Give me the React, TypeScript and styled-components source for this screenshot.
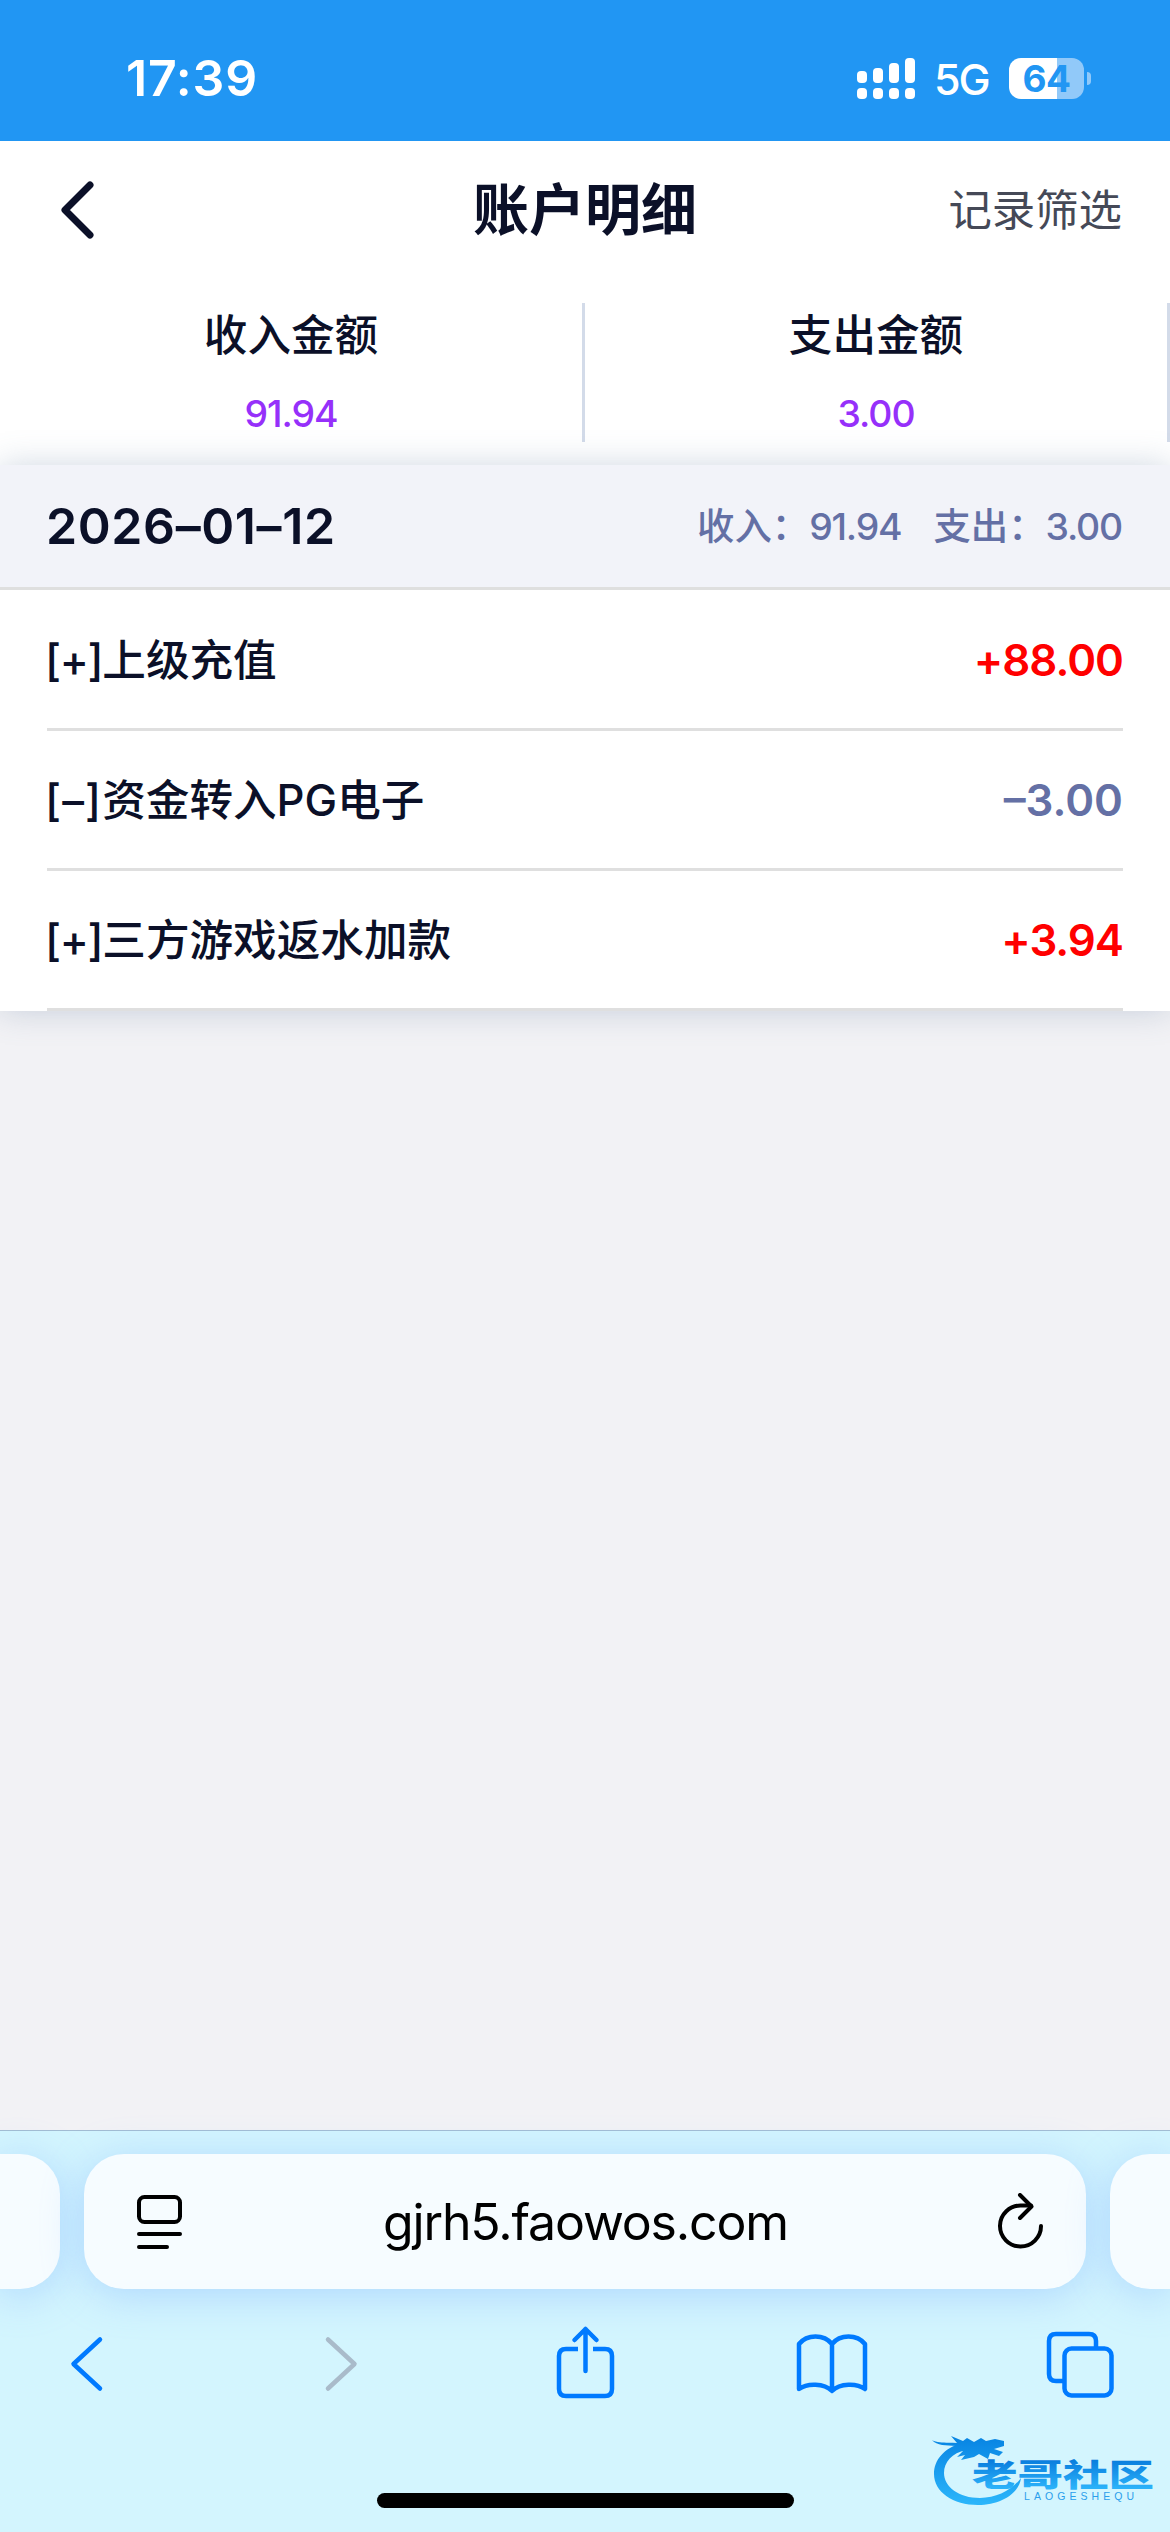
import React from 'react';
import styled, { createGlobalStyle } from 'styled-components';

const GlobalStyle = createGlobalStyle`
  * {
    box-sizing: border-box;
  }

  body {
    margin: 0;
    background: #f2f2f5;
    font-family: Inter, 'Noto Sans CJK SC', sans-serif;
    color: #0b1028;
  }
`;

const Screen = styled.div`
  position: relative;
  display: flex;
  flex-direction: column;
  width: 1170px;
  height: 2532px;
  overflow: hidden;
  background: #f2f2f5;
`;

/* status bar */
const StatusBar = styled.header`
  display: flex;
  justify-content: space-between;
  align-items: center;
  height: 141px;
  padding: 15px 79px 0 126px;
  background: #2196f3;
  color: #fff;
`;

const Clock = styled.time`
  font-size: 50px;
  font-weight: 600;
  line-height: 60px;
  letter-spacing: 0.8px;
`;

const StatusIcons = styled.div`
  display: flex;
  align-items: center;
`;

const Network = styled.span`
  width: 56px;
  margin: 2px 19px 0 18px;
  font-size: 43px;
  font-weight: 500;
  line-height: 44px;
  letter-spacing: -2px;
`;

const Battery = styled.div`
  display: flex;
  align-items: center;
  justify-content: center;
  width: 75px;
  height: 41px;
  border-radius: 12px;
  background: linear-gradient(to right, #fff 48px, #91c9f9 48px);
  color: #2196f3;
  font-size: 37px;
  font-weight: 700;
  line-height: 41px;
  letter-spacing: -0.5px;
`;

const BatteryCap = styled.div`
  width: 4px;
  height: 13px;
  margin-left: 3px;
  border-radius: 0 4px 4px 0;
  background: #91c9f9;
`;

/* page header */
const NavBar = styled.nav`
  display: grid;
  grid-template-columns: 1fr auto 1fr;
  align-items: center;
  height: 138px;
  padding: 0 48px 0 57px;
  background: #fff;
`;

const PageTitle = styled.h1`
  margin: 0 9px 0 0;
  font-size: 56px;
  font-weight: 700;
  line-height: 80px;
`;

const FilterLink = styled.span`
  justify-self: end;
  color: #454957;
  font-size: 43.4px;
  line-height: 60px;
`;

const Summary = styled.section`
  display: flex;
  height: 186px;
  padding-top: 24px;
  background: #fff;
`;

const SummaryItem = styled.div`
  display: flex;
  flex: 1;
  flex-direction: column;
  align-items: center;
  height: 139px;
  border-right: 3px solid #d3dbe9;
`;

const SummaryLabel = styled.span`
  margin-top: 1px;
  font-size: 43.6px;
  font-weight: 500;
  line-height: 64px;
`;

const SummaryValue = styled.span`
  margin-top: 22px;
  color: #9630fa;
  font-size: 37.4px;
  font-weight: 500;
  line-height: 48px;
  letter-spacing: -1px;
`;

/* day group */
const DayGroup = styled.section`
  position: relative;
  background: #fff;
  box-shadow: 0 0 31px rgba(100, 125, 160, 0.3);
`;

const DayHeader = styled.div`
  display: flex;
  justify-content: space-between;
  align-items: center;
  height: 125px;
  padding: 0 48px 0 46px;
  border-bottom: 3px solid #dfdfdf;
  background: #f2f3f9;
`;

const DayDate = styled.span`
  font-size: 50px;
  font-weight: 600;
  line-height: 60px;
  letter-spacing: 0.6px;
`;

const DayTotals = styled.div`
  display: flex;
  gap: 32px;
  padding-top: 2px;
  color: #6470a5;
  font-size: 37.4px;
  font-weight: 500;
  line-height: 50px;
`;

const TotalAmount = styled.span`
  letter-spacing: -1.200px;
`;

const RecordList = styled.ul`
  margin: 0;
  padding: 1px 47px 0;
  list-style: none;
`;

const RecordRow = styled.li`
  display: flex;
  justify-content: space-between;
  align-items: center;
  height: 140px;
  padding-top: 2px;
  border-bottom: 3px solid #dfdfdf;
`;

const RecordName = styled.span`
  margin-left: -2px;
  font-size: 43.6px;
  font-weight: 500;
  line-height: 64px;
`;

const RecordSign = styled.span<{ $income: boolean }>`
  letter-spacing: ${({ $income }) => ($income ? '-1.3px' : '1.1px')};
`;

const RecordAmount = styled.span<{ $income: boolean }>`
  color: ${({ $income }) => ($income ? '#ff0000' : '#6470a5')};
  font-size: 43.8px;
  font-weight: 600;
  line-height: 64px;
  letter-spacing: ${({ $income }) => ($income ? '-1px' : '0')};
`;

/* safari bottom bar */
const BrowserBar = styled.footer`
  display: flex;
  flex-direction: column;
  height: 402px;
  margin-top: auto;
  border-top: 1px solid #a2bcd3;
  background: #d3f5fe;
`;

const TabStrip = styled.div`
  display: flex;
  gap: 24px;
  height: 158px;
  padding-top: 23px;
`;

const AddressBar = styled.div`
  display: flex;
  flex: 1;
  justify-content: space-between;
  align-items: center;
  padding: 0 39px 0 51px;
  border-radius: 40px;
  background: #f6fcff;
  box-shadow: 0 6px 40px rgba(130, 180, 255, 0.45);
`;

const TabEdge = styled.div<{ $side: 'left' | 'right' }>`
  width: 60px;
  border-radius: ${({ $side }) => ($side === 'left' ? '0 40px 40px 0' : '40px 0 0 40px')};
  background: #f6fcff;
  box-shadow: 0 6px 40px rgba(130, 180, 255, 0.45);
`;

const Url = styled.span`
  margin-right: 11px;
  color: #000;
  font-size: 50px;
  line-height: 64px;
  letter-spacing: -1.150px;
`;

const Toolbar = styled.div`
  position: relative;
  display: flex;
  justify-content: space-between;
  align-items: center;
  height: 80px;
  margin-top: 35px;
  padding: 0 50px 0 47px;
`;

const HomeIndicator = styled.div`
  width: 417px;
  height: 15px;
  margin: 89px auto 0;
  border-radius: 8px;
  background: #000;
`;

const Watermark = styled.svg`
  position: absolute;
  right: 10px;
  bottom: 16px;
`;

const SIGNAL_TOPS = [13, 10, 5, 0];

const SignalIcon = () => (
  <svg width="59" height="41" viewBox="0 0 59 41" fill="#fff">
    {SIGNAL_TOPS.map((top, i) => (
      <g key={top}>
        <rect x={i * 16} y={top} width="10" height={25 - top} rx="4" />
        <rect x={i * 16} y="30" width="10" height="11" rx="4" />
      </g>
    ))}
  </svg>
);

const BackIcon = () => (
  <svg width="40" height="62" viewBox="0 0 40 62" fill="none">
    <path d="M33 6L8 31L33 56" stroke="#0b1028" strokeWidth="7" strokeLinecap="round" strokeLinejoin="round" />
  </svg>
);

const PageMenuIcon = () => (
  <svg width="50" height="58" viewBox="0 0 50 58" fill="none" stroke="#000" strokeWidth="4" strokeLinecap="round">
    <rect x="4" y="4" width="41" height="25" rx="5.5" />
    <path d="M4 41H45M4 54H32" />
  </svg>
);

const ReloadIcon = () => (
  <svg width="50" height="58" viewBox="0 0 50 58" fill="none" stroke="#000" strokeWidth="4" strokeLinecap="round" strokeLinejoin="round">
    <path d="M44 33A20.5 20.5 0 1 1 24 12.5H34" />
    <path d="M23 2L34.5 13.5L23 25" />
  </svg>
);

const ToolIcon = ({ color = '#007aff', children }: { color?: string; children: React.ReactNode }) => (
  <svg width="80" height="80" viewBox="0 0 80 80" fill="none" stroke={color} strokeWidth="4.5" strokeLinecap="round" strokeLinejoin="round">
    {children}
  </svg>
);

const BrandMark = () => (
  <Watermark width="232" height="84" viewBox="0 0 232 84">
    <defs>
      <linearGradient id="brand" x1="0" y1="5" x2="0" y2="74" gradientUnits="userSpaceOnUse">
        <stop offset="0" stopColor="#0784e3" />
        <stop offset="1" stopColor="#2db7fb" />
      </linearGradient>
      <linearGradient id="brandText" x1="0" y1="27" x2="0" y2="56" gradientUnits="userSpaceOnUse">
        <stop offset="0" stopColor="#087bdc" />
        <stop offset="1" stopColor="#2bb2fa" />
      </linearGradient>
    </defs>
    {/* dragon ring */}
    <path
      fill="url(#brand)"
      d="M34 11C16 16 6 28 6 42C6 60 25 73 50 73C72 73 91 62 93 46C84 58 69 66 52 66C31 66 16 55 16 41C16 30 24 21 38 18Z"
    />
    {/* dragon head */}
    <path
      fill="url(#brand)"
      d="M4 8C11 12 21 10 29 11L23 4L35 9L39 6L46 10L53 6L58 9L67 7L76 9V14L66 17L75 20L71 24L62 21L60 27L51 22L46 25L33 28L37 23L29 25L35 19L24 16L28 14C18 13 9 14 4 8Z"
    />
    <text x="44" y="53.5" fill="url(#brandText)" fontFamily="'Noto Sans CJK SC', sans-serif" fontSize="31" fontWeight="900" textLength="182" lengthAdjust="spacingAndGlyphs">
      老哥社区
    </text>
    <text x="96" y="67.5" fill="#2a9eec" fontFamily="'Liberation Sans', sans-serif" fontSize="10.5" textLength="110" lengthAdjust="spacing">
      LAOGESHEQU
    </text>
  </Watermark>
);

interface AccountRecord {
  sign: string;
  name: string;
  amount: string;
  income: boolean;
}

const records: AccountRecord[] = [
  { sign: '[+]', name: '上级充值', amount: '+88.00', income: true },
  { sign: '[–]', name: '资金转入PG电子', amount: '–3.00', income: false },
  { sign: '[+]', name: '三方游戏返水加款', amount: '+3.94', income: true },
];

export default function App() {
  return (
    <Screen>
      <GlobalStyle />
      <StatusBar>
        <Clock>17:39</Clock>
        <StatusIcons>
          <SignalIcon />
          <Network>5G</Network>
          <Battery>64</Battery>
          <BatteryCap />
        </StatusIcons>
      </StatusBar>

      <NavBar>
        <BackIcon />
        <PageTitle>账户明细</PageTitle>
        <FilterLink>记录筛选</FilterLink>
      </NavBar>

      <Summary>
        <SummaryItem>
          <SummaryLabel>收入金额</SummaryLabel>
          <SummaryValue>91.94</SummaryValue>
        </SummaryItem>
        <SummaryItem>
          <SummaryLabel>支出金额</SummaryLabel>
          <SummaryValue>3.00</SummaryValue>
        </SummaryItem>
      </Summary>

      <DayGroup>
        <DayHeader>
          <DayDate>2026–01–12</DayDate>
          <DayTotals>
            <span>
              收入：<TotalAmount>91.94</TotalAmount>
            </span>
            <span>
              支出：<TotalAmount>3.00</TotalAmount>
            </span>
          </DayTotals>
        </DayHeader>
        <RecordList>
          {records.map(record => (
            <RecordRow key={record.name}>
              <RecordName>
                <RecordSign $income={record.income}>{record.sign}</RecordSign>
                {record.name}
              </RecordName>
              <RecordAmount $income={record.income}>{record.amount}</RecordAmount>
            </RecordRow>
          ))}
        </RecordList>
      </DayGroup>

      <BrowserBar>
        <TabStrip>
          <TabEdge $side="left" />
          <AddressBar>
            <PageMenuIcon />
            <Url>gjrh5.faowos.com</Url>
            <ReloadIcon />
          </AddressBar>
          <TabEdge $side="right" />
        </TabStrip>
        <Toolbar>
          <ToolIcon>
            <path d="M53 15.5L26.5 40L53 64.5" />
          </ToolIcon>
          <ToolIcon color="#a9bbca">
            <path d="M33 15.5L59.5 40L33 64.5" />
          </ToolIcon>
          {/* share */}
          <ToolIcon>
            <path d="M34 25H22Q15 25 15 32V65Q15 72 22 72H61Q68 72 68 65V32Q68 25 61 25H49" strokeLinecap="butt" />
            <path d="M41.5 47V5M30.5 16L41.5 5L52.5 16" />
          </ToolIcon>
          {/* bookmarks */}
          <ToolIcon>
            <path d="M40 20C32 10 15 10 7 20V65C15 59 32 59 40 67C48 59 65 59 73 65V20C65 10 48 10 40 20ZM40 20V66" />
          </ToolIcon>
          {/* tabs */}
          <ToolIcon>
            <path d="M23 57H16Q9 57 9 50V17Q9 10 16 10H49Q56 10 56 17V23" strokeLinecap="butt" />
            <rect x="24.5" y="24.5" width="47" height="47" rx="7" />
          </ToolIcon>
        </Toolbar>
        <HomeIndicator />
      </BrowserBar>

      <BrandMark />
    </Screen>
  );
}
